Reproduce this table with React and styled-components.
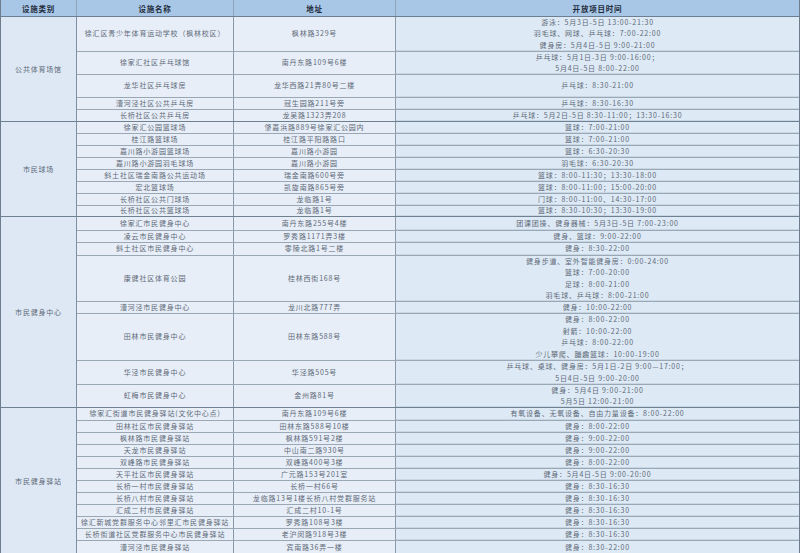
import React from "react";
import styled, { createGlobalStyle } from "styled-components";

const GlobalStyle = createGlobalStyle`
  * { box-sizing: border-box; }
  body {
    margin: 0;
    background: #ffffff;
    font-family: "Noto Sans CJK SC", "Noto Sans", sans-serif;
  }
`;

const COLS = [76, 157, 162, 405];

const Table = styled.div`
  width: 800px;
  height: 553px;
  border-left: 1px solid #6d7d8e;
  border-right: 1px solid #6d7d8e;
  overflow: hidden;
  font-size: 7px;
  letter-spacing: 0.8px;
  color: #5e6978;
`;

const HeaderRow = styled.div`
  display: flex;
  height: 17px;
  background: #a8c7e7;
  border-bottom: 1px solid #6c7e92;
`;

const HeadCell = styled.div`
  flex: ${(p) => (p.$grow ? "1" : `0 0 ${p.$w}px`)};
  display: flex;
  align-items: center;
  justify-content: center;
  font-weight: 700;
  font-size: 7.5px;
  color: #1f2b3b;
  border-right: ${(p) => (p.$last ? "none" : "1px solid #8ea4bb")};
`;

const Section = styled.div`
  display: flex;
`;

const CatCell = styled.div`
  flex: 0 0 ${COLS[0]}px;
  display: flex;
  align-items: center;
  justify-content: center;
  background: #dde8f4;
  border-right: 1px solid #7f8fa1;
  border-bottom: 1px solid #6f8091;
  ${Section}:last-child & { border-bottom: none; }
`;

const Rows = styled.div`
  flex: 1;
  display: flex;
  flex-direction: column;
`;

const Row = styled.div`
  display: flex;
  flex: 0 0 ${(p) => p.$h}px;
  min-height: 0;
  overflow: hidden;
  border-bottom: 1px solid #9aa7b5;
  &:last-child { border-bottom-color: #6f8091; }
  ${Section}:last-child &:last-child { border-bottom: none; }
`;

const Cell = styled.div`
  flex: ${(p) => (p.$grow ? "1" : `0 0 ${p.$w}px`)};
  display: flex;
  flex-direction: column;
  align-items: center;
  justify-content: center;
  line-height: 11.5px;
  white-space: nowrap;
  background: ${(p) => (p.$grow ? "#dde9f5" : "#e7eef7")};
  border-right: ${(p) => (p.$grow ? "none" : "1px solid #8a98a8")};
  box-shadow: ${(p) => (p.$grow ? "inset 0 -1px 0 #c9d6e4" : "none")};
`;

const sections = [
  {
    name: "公共体育场馆",
    rows: [
      { h: 35, n: "徐汇区青少年体育运动学校（枫林校区）", a: "枫林路329号", t: ["游泳：5月3日-5日 13:00-21:30", "羽毛球、网球、乒乓球：7:00-22:00", "健身房：5月4日-5日 9:00-21:00"] },
      { h: 23, n: "徐家汇社区乒乓球馆", a: "南丹东路109号6楼", t: ["乒乓球：5月1日-3日 9:00-16:00；", "5月4日-5日 8:00-22:00"] },
      { h: 23, n: "龙华社区乒乓球房", a: "龙华西路21弄80号二楼", t: ["乒乓球：8:30-21:00"] },
      { h: 12, n: "漕河泾社区公共乒乓房", a: "冠生园路211号旁", t: ["乒乓球：8:30-16:30"] },
      { h: 12, n: "长桥社区公共乒乓房", a: "龙吴路1323弄208", t: ["乒乓球：5月2日-5日 8:30-11:00；13:30-16:30"] },
    ],
  },
  {
    name: "市民球场",
    rows: [
      { h: 12, n: "徐家汇公园篮球场", a: "肇嘉浜路889号徐家汇公园内", t: ["篮球：7:00-21:00"] },
      { h: 12, n: "桂江路篮球场", a: "桂江路平阳路路口", t: ["篮球：7:00-21:00"] },
      { h: 12, n: "嘉川路小游园篮球场", a: "嘉川路小游园", t: ["篮球：6:30-20:30"] },
      { h: 12, n: "嘉川路小游园羽毛球场", a: "嘉川路小游园", t: ["羽毛球：6:30-20:30"] },
      { h: 12, n: "斜土社区瑞金南路公共运动场", a: "瑞金南路600号旁", t: ["篮球：8:00-11:30；13:30-18:00"] },
      { h: 12, n: "宏北篮球场", a: "凯旋南路865号旁", t: ["篮球：8:00-11:00；15:00-20:00"] },
      { h: 12, n: "长桥社区公共门球场", a: "龙临路1号", t: ["门球：8:00-11:00、14:30-17:00"] },
      { h: 11, n: "长桥社区公共篮球场", a: "龙临路1号", t: ["篮球：8:30-10:30；13:30-19:00"] },
    ],
  },
  {
    name: "市民健身中心",
    rows: [
      { h: 14, n: "徐家汇市民健身中心", a: "南丹东路255号4楼", t: ["团课团操、健身器械：5月3日-5日 7:00-23:00"] },
      { h: 12, n: "凌云市民健身中心", a: "罗秀路1171弄3楼", t: ["健身、篮球：9:00-22:00"] },
      { h: 13, n: "斜土社区市民健身中心", a: "零陵北路1号二楼", t: ["健身：8:30-22:00"] },
      { h: 46, n: "康健社区体育公园", a: "桂林西街168号", t: ["健身步道、室外智能健身房：0:00-24:00", "篮球：7:00-20:00", "足球：8:00-21:00", "羽毛球、乒乓球：8:00-21:00"] },
      { h: 12, n: "漕河泾市民健身中心", a: "龙川北路777弄", t: ["健身：10:00-22:00"] },
      { h: 47, n: "田林市民健身中心", a: "田林东路588号", t: ["健身：8:00-22:00", "射箭：10:00-22:00", "乒乓球：8:00-22:00", "少儿攀爬、蹦趣篮球：10:00-19:00"] },
      { h: 24, n: "华泾市民健身中心", a: "华泾路505号", t: ["乒乓球、桌球、健身房：5月1日-2日 9:00—17:00；", "5日4日-5日 9:00-20:00"] },
      { h: 23, n: "虹梅市民健身中心", a: "金州路81号", t: ["健身：5月4日 9:00-21:00", "5月5日 12:00-21:00"] },
    ],
  },
  {
    name: "市民健身驿站",
    rows: [
      { h: 13, n: "徐家汇街道市民健身驿站(文化中心点)", a: "南丹东路109号6楼", t: ["有氧设备、无氧设备、自由力量设备：8:00-22:00"] },
      { h: 12, n: "田林社区市民健身驿站", a: "田林东路588号10楼", t: ["健身：8:00-22:00"] },
      { h: 12, n: "枫林路市民健身驿站", a: "枫林路591号2楼", t: ["健身：9:00-22:00"] },
      { h: 12, n: "天龙市民健身驿站", a: "中山南二路930号", t: ["健身：9:00-22:00"] },
      { h: 12, n: "双峰路市民健身驿站", a: "双峰路400号3楼", t: ["健身：8:00-22:00"] },
      { h: 12, n: "天平社区市民健身驿站", a: "广元路153号201室", t: ["健身：5月4日-5日 9:00-20:00"] },
      { h: 12, n: "长桥一村市民健身驿站", a: "长桥一村66号", t: ["健身：8:30-16:30"] },
      { h: 12, n: "长桥八村市民健身驿站", a: "龙临路13号1楼长桥八村党群服务站", t: ["健身：8:30-16:30"] },
      { h: 12, n: "汇成二村市民健身驿站", a: "汇成二村10-1号", t: ["健身：8:30-16:30"] },
      { h: 12, n: "徐汇新城党群服务中心邻里汇市民健身驿站", a: "罗秀路108号3楼", t: ["健身：8:30-16:30"] },
      { h: 12, n: "长桥街道社区党群服务中心市民健身驿站", a: "老沪闵路918号3楼", t: ["健身：8:30-16:30"] },
      { h: 13, n: "漕河泾市民健身驿站", a: "宾南路36弄一楼", t: ["健身：8:30-22:00"] },
    ],
  },
];

export default function App() {
  return (
    <>
      <GlobalStyle />
      <Table>
        <HeaderRow>
          <HeadCell $w={COLS[0]}>设施类别</HeadCell>
          <HeadCell $w={COLS[1]}>设施名称</HeadCell>
          <HeadCell $w={COLS[2]}>地址</HeadCell>
          <HeadCell $grow $last>开放项目时间</HeadCell>
        </HeaderRow>
        {sections.map((s) => (
          <Section key={s.name}>
            <CatCell>{s.name}</CatCell>
            <Rows>
              {s.rows.map((r) => (
                <Row key={r.n} $h={r.h}>
                  <Cell $w={COLS[1]}>{r.n}</Cell>
                  <Cell $w={COLS[2]}>{r.a}</Cell>
                  <Cell $grow>
                    {r.t.map((line) => (
                      <span key={line}>{line}</span>
                    ))}
                  </Cell>
                </Row>
              ))}
            </Rows>
          </Section>
        ))}
      </Table>
    </>
  );
}
